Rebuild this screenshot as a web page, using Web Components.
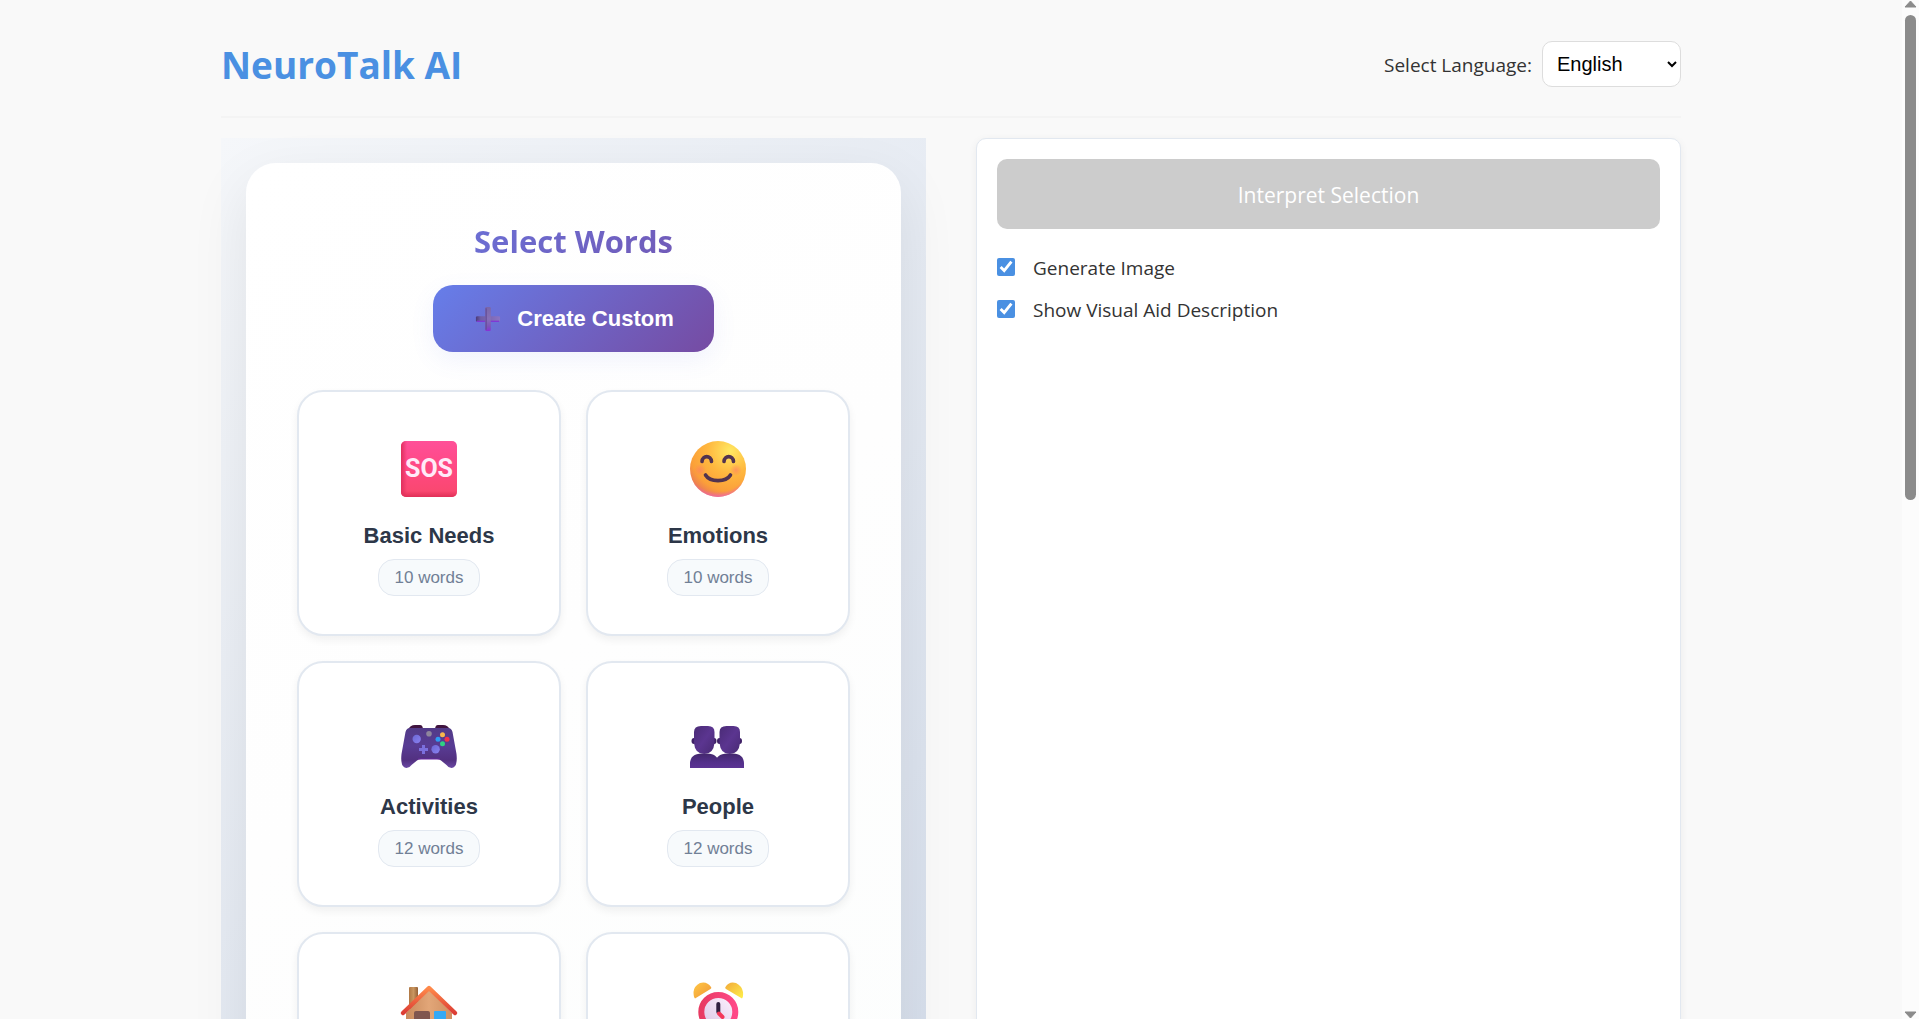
<!DOCTYPE html>
<html lang="en">
<head>
<meta charset="utf-8">
<title>NeuroTalk AI</title>
<style>
  html, body { margin: 0; height: 100%; overflow: hidden; }
  body { background: #f9f9f9; color: #333; font-family: "Segoe UI", "Open Sans", "Noto Sans", sans-serif; font-size: 19px; }
</style>
</head>
<body>
<neuro-app></neuro-app>

<script>
const define = (name, html, setup) => {
  const template = document.createElement('template');
  template.innerHTML = html;
  customElements.define(name, class extends HTMLElement {
    constructor() {
      super();
      this.attachShadow({ mode: 'open' }).append(template.content.cloneNode(true));
    }
    connectedCallback() { if (setup) setup(this, this.shadowRoot); }
  });
};

/* ---------- pictograms ---------- */
const ICONS = {
  plus: `<defs><linearGradient id="a" x1="0" y1="0" x2="0" y2="1"><stop offset="0" stop-color="#7a66a8"/><stop offset=".5" stop-color="#8670b8"/><stop offset=".8" stop-color="#7d55b8"/><stop offset="1" stop-color="#8a2fd6"/></linearGradient>
    <linearGradient id="b"><stop offset="0" stop-color="#4b3a78"/><stop offset=".2" stop-color="#6f5ea6"/><stop offset="1" stop-color="#8a74c4"/></linearGradient></defs>
    <rect x="2" y="22" width="52" height="12" rx="3" fill="url(#b)"/>
    <path d="M4 33H52" stroke="#8038d4" stroke-width="3"/>
    <rect x="22" y="2" width="12" height="52" rx="3" fill="url(#a)"/>
    <path d="M24 5V51" stroke="#66509a" stroke-width="3"/>`,
  sos: `<defs><linearGradient id="a" x1="0" y1="0" x2="0" y2="1"><stop offset="0" stop-color="#ff4f98"/><stop offset=".55" stop-color="#ff4880"/><stop offset="1" stop-color="#f8486c"/></linearGradient>
    <linearGradient id="b"><stop offset="0" stop-color="#e0305e"/><stop offset="1" stop-color="#e0305e" stop-opacity="0"/></linearGradient>
    <linearGradient id="c" x1="0" y1="1" x2="0" y2="0"><stop offset="0" stop-color="#e02f58"/><stop offset="1" stop-color="#e02f58" stop-opacity="0"/></linearGradient></defs>
    <rect width="56" height="56" rx="5" fill="url(#a)"/>
    <path d="M5 0H6V56H5A5 5 0 0 1 0 51V5A5 5 0 0 1 5 0Z" fill="url(#b)"/>
    <path d="M0 50H56V51A5 5 0 0 1 51 56H5A5 5 0 0 1 0 51Z" fill="url(#c)"/>
    <text x="28" y="36" text-anchor="middle" font-family="'Liberation Sans Narrow', 'Roboto', sans-serif" font-weight="700" font-size="25" fill="#ffeaf8">SOS</text>`,
  smile: `<defs><radialGradient id="a" cx=".72" cy=".18" r=".9"><stop offset="0" stop-color="#ffe862"/><stop offset=".45" stop-color="#ffb83f"/><stop offset=".8" stop-color="#fb9f39"/><stop offset="1" stop-color="#e8755a"/></radialGradient>
    <radialGradient id="b" cx=".5" cy=".3" r=".72"><stop offset=".84" stop-color="#f26a9e" stop-opacity="0"/><stop offset="1" stop-color="#ee64b8"/></radialGradient>
    <radialGradient id="c"><stop offset="0" stop-color="#ff7a68" stop-opacity=".6"/><stop offset="1" stop-color="#ff7a68" stop-opacity="0"/></radialGradient></defs>
    <circle cx="28" cy="28" r="28" fill="url(#a)"/><circle cx="28" cy="28" r="28" fill="url(#b)"/>
    <circle cx="10" cy="29" r="6" fill="url(#c)"/><circle cx="46" cy="29" r="6" fill="url(#c)"/>
    <path d="M12 20.500C12.500 14 21 14 21.500 20.500M34 20.500C34.500 14 43 14 43.500 20.500M15.500 34C20 41.500 36 41.500 40.500 34" fill="none" stroke="#51334f" stroke-width="3.600" stroke-linecap="round"/>`,
  gamepad: `<defs><linearGradient id="a" x1="0" y1="0" x2="0" y2="1"><stop offset="0" stop-color="#523b88"/><stop offset=".45" stop-color="#583c94"/><stop offset=".8" stop-color="#523080"/><stop offset="1" stop-color="#6b49a4"/></linearGradient>
    <linearGradient id="b" x1="0" y1="0" x2="1" y2="1"><stop offset="0" stop-color="#6b68d4"/><stop offset="1" stop-color="#8a80f0"/></linearGradient></defs>
    <path d="M7 18Q9 13 14 13H19Q22 13 22 18ZM34 18Q34 13 37 13H42Q47 13 49 18Z" fill="#40143f"/>
    <path d="M9 16H47Q50.500 16 51.500 20L55.500 42Q57 55.500 50.500 56Q47.500 56 45.500 53L40 48.500Q38.500 47 36 47H20Q17.500 47 16 48.500L10.500 53Q8.500 56 5.500 56Q-1 55.500 .5 42L4.500 20Q5.500 16 9 16Z" fill="url(#a)"/>
    <path d="M17 47H39" stroke="#6a26a2" stroke-width="1"/>
    <circle cx="15.700" cy="27" r="4.200" fill="url(#b)"/><circle cx="34.600" cy="37.200" r="4.200" fill="url(#b)"/>
    <path d="M22.500 33V42M18 37.500H27" stroke="#7b6fdd" stroke-width="3"/>
    <circle cx="28" cy="21.700" r="2.800" fill="#8e869c"/>
    <circle cx="41.500" cy="22.700" r="2.500" fill="#f8b84c"/><circle cx="37" cy="27.300" r="2.500" fill="#2e9cf4"/><circle cx="46" cy="27.300" r="2.500" fill="#f4304c"/><circle cx="41.500" cy="31.700" r="2.500" fill="#2fd383"/>`,
  people: `<defs><linearGradient id="a" x1="0" y1="0" x2="1" y2="1"><stop offset="0" stop-color="#4a2b76"/><stop offset=".5" stop-color="#5b3590"/><stop offset="1" stop-color="#492a74"/></linearGradient>
    <linearGradient id="b" x1="0" y1="0" x2="0" y2="1"><stop offset="0" stop-color="#43276c"/><stop offset=".6" stop-color="#53308a"/><stop offset="1" stop-color="#5c3494"/></linearGradient>
    <g id="p"><path d="M0 56V52Q0 41.500 12 41.500H17Q28.500 41.500 28.500 52V56Z" fill="url(#b)"/>
    <ellipse cx="4" cy="29" rx="2.500" ry="3" fill="#3f2066"/><ellipse cx="24" cy="29" rx="2.500" ry="3" fill="#3f2066"/>
    <path d="M4 20Q4 14 11 14H18Q24.500 14 24.500 20V31Q23.500 42 14.200 42Q5 42 4 31Z" fill="url(#a)"/></g></defs>
    <use href="#p"/><use href="#p" x="25.500"/>`,
  house: `<defs><linearGradient id="a"><stop offset="0" stop-color="#c98a5c"/><stop offset=".5" stop-color="#e2a678"/><stop offset="1" stop-color="#cf9062"/></linearGradient>
    <linearGradient id="b" x1="0" y1="0" x2="0" y2="1"><stop offset="0" stop-color="#ff8a4a"/><stop offset="1" stop-color="#dc3c34"/></linearGradient>
    <linearGradient id="c"><stop offset="0" stop-color="#b07845"/><stop offset=".5" stop-color="#c99660"/><stop offset="1" stop-color="#946036"/></linearGradient></defs>
    <rect x="8" y="4" width="9" height="22" rx="1" fill="url(#c)"/>
    <path d="M5 30L28 7L51 30V54H5Z" fill="url(#a)"/>
    <path d="M2 30L28 5L54 30" fill="none" stroke="url(#b)" stroke-width="4.500" stroke-linecap="round" stroke-linejoin="round"/>
    <path d="M13 54V30Q13 28 15 28H27Q29 28 29 30V54Z" fill="#80564f"/>
    <rect x="33" y="28" width="12" height="13" rx="1" fill="#35a9f5"/>`,
  clock: `<defs><linearGradient id="a" x1="0" y1="0" x2="1" y2="1"><stop offset="0" stop-color="#ffc845"/><stop offset="1" stop-color="#ef9436"/></linearGradient>
    <linearGradient id="b" x1="0" y1="0" x2="1" y2="1"><stop offset="0" stop-color="#f2a93a"/><stop offset="1" stop-color="#fff04a"/></linearGradient>
    <linearGradient id="c"><stop offset="0" stop-color="#e83a62"/><stop offset="1" stop-color="#ff4888"/></linearGradient>
    <linearGradient id="d" x1="1" y1="0" x2="0" y2="1"><stop offset="0" stop-color="#fff4ff"/><stop offset="1" stop-color="#d9c4e4"/></linearGradient></defs>
    <path d="M5 15.500Q3.500 14 3.500 9Q4 3 10 0Q17 -2 21 4Q22 5 20.500 6Z" fill="url(#a)"/>
    <path d="M52 15.500Q53.500 14 53 9Q52 3 46 0Q39 -2 35.500 4Q34.500 5 36 6Z" fill="url(#b)"/>
    <circle cx="28.300" cy="29" r="17" fill="url(#d)" stroke="url(#c)" stroke-width="6"/>
    <path d="M28.300 21V29" stroke="#30203f" stroke-width="4" stroke-linecap="round"/><path d="M29 30.500L32.500 34" stroke="#f4395a" stroke-width="4" stroke-linecap="round"/>`
};
define('picto-icon', `
<style>
  :host { display: block; width: 56px; height: 56px; }
  svg { display: block; width: 100%; height: 100%; overflow: visible; }
</style>
<svg viewBox="0 0 56 56" aria-hidden="true"></svg>`,
  (host, root) => { root.querySelector('svg').innerHTML = ICONS[host.getAttribute('name')]; });

/* ---------- header ---------- */
define('app-header', `
<style>
  :host { display: block; }
  header { display: flex; justify-content: space-between; align-items: center; height: 88px; padding-bottom: 8px; border-bottom: 2px solid #f4f4f4; }
  h1 { margin: 0; padding-top: 2px; font-size: 37px; line-height: 56px; color: #4a90e2; }
  .language { display: flex; align-items: center; gap: 10px; }
  label { padding-top: 2px; }
  select { width: 139px; height: 46px; padding: 0 10px; font: 20px "Liberation Sans", Arial, sans-serif; color: #000; background: #fff; border: 1px solid #ddd; border-radius: 10px; }
</style>
<header>
  <h1>NeuroTalk AI</h1>
  <div class="language">
    <label for="language">Select Language:</label>
    <select id="language"><option>English</option></select>
  </div>
</header>`);

/* ---------- word categories ---------- */
define('category-card', `
<style>
  :host { display: block; }
  button { display: flex; flex-direction: column; align-items: center; width: 100%; padding: 49px 16px 38px; background: #fff; border: 2px solid #e2e8f0; border-radius: 26px; box-shadow: 0 4px 8px rgba(0, 0, 0, .06); font-family: "Liberation Sans", Arial, sans-serif; cursor: pointer; }
  .name { margin: 26px 0 10px; font-size: 22px; font-weight: 700; line-height: 26px; color: #2d3748; }
  .count { box-sizing: border-box; height: 37px; padding: 0 16px; font-size: 17px; line-height: 35px; color: #718096; background: #f7fafc; border: 1px solid #e2e8f0; border-radius: 16px; }
</style>
<button type="button">
  <slot name="icon"></slot>
  <span class="name"><slot></slot></span>
  <span class="count"><slot name="count"></slot></span>
</button>`);

define('word-selector', `
<style>
  :host { display: block; padding: 25px; background: linear-gradient(135deg, #f5f7fa 0%, #c3cfe2 100%); }
  section { padding: 53px 51px 51px; min-height: 1780px; background: linear-gradient(145deg, #fff 0%, #fefefe 30%, #fafdfc 100%); border-radius: 30px; box-shadow: 0 20px 60px rgba(0, 0, 0, .08); }
  .top { display: flex; flex-direction: column; align-items: center; gap: 18px; margin-bottom: 38px; }
  h2 { margin: 0; align-self: stretch; text-align: center; font-size: 31px; line-height: 51px; color: transparent; background: linear-gradient(135deg, #667eea 0%, #764ba2 100%); background-clip: text; -webkit-background-clip: text; }
  .create { display: flex; align-items: center; justify-content: center; gap: 16px; height: 67px; padding: 0 40px 0 42px; border: 0; border-radius: 20px; background: linear-gradient(135deg, #667eea 0%, #764ba2 100%); box-shadow: 0 8px 25px rgba(102, 126, 234, .09); color: #fff; font: 700 22px "Liberation Sans", Arial, sans-serif; }
  .create picto-icon { width: 26px; height: 26px; }
  .grid { display: grid; grid-template-columns: 1fr 1fr; gap: 25px; }
</style>
<section>
  <div class="top">
    <h2>Select Words</h2>
    <button class="create" type="button"><picto-icon name="plus"></picto-icon>Create Custom</button>
  </div>
  <div class="grid">
    <category-card><picto-icon slot="icon" name="sos"></picto-icon>Basic Needs<span slot="count">10 words</span></category-card>
    <category-card><picto-icon slot="icon" name="smile"></picto-icon>Emotions<span slot="count">10 words</span></category-card>
    <category-card><picto-icon slot="icon" name="gamepad"></picto-icon>Activities<span slot="count">12 words</span></category-card>
    <category-card><picto-icon slot="icon" name="people"></picto-icon>People<span slot="count">12 words</span></category-card>
    <category-card><picto-icon slot="icon" name="house"></picto-icon></category-card>
    <category-card><picto-icon slot="icon" name="clock"></picto-icon></category-card>
  </div>
</section>`);

/* ---------- interpretation ---------- */
define('option-check', `
<style>
  :host { display: block; }
  label { display: flex; align-items: center; gap: 18px; line-height: 30px; }
  span { padding-top: 2px; }
  input { width: 18px; height: 18px; margin: 0; accent-color: #4a90e2; }
</style>
<label><input type="checkbox" checked><span><slot></slot></span></label>`);

define('interpret-panel', `
<style>
  :host { display: block; padding: 20px; background: #fff; border: 1px solid #e2e8f0; border-radius: 10px; box-shadow: 0 2px 8px rgba(0, 0, 0, .06); }
  button { display: block; width: 100%; height: 70px; margin-bottom: 22px; padding: 2px 0 0; border: 0; border-radius: 10px; background: #ccc; color: #fff; font-family: inherit; font-size: 21px; }
  .options { display: flex; flex-direction: column; gap: 10px; }
</style>
<button type="button" disabled>Interpret Selection</button>
<div class="options">
  <option-check>Generate Image</option-check>
  <option-check>Show Visual Aid Description</option-check>
</div>`);

/* ---------- scroll rail ---------- */
define('scroll-rail', `
<style>
  :host { display: flex; flex-direction: column; align-items: center; box-sizing: border-box; width: 17px; background: #fcfcfc; }
  svg { display: block; flex: none; width: 13px; height: 8px; }
  .track { flex: 1; padding: 7px 0; }
  .thumb { width: 11px; height: 49%; border-radius: 6px; background: #8b8b8b; }
</style>
<svg viewBox="0 0 13 8"><path d="M6.500 1L12 7H1Z" fill="#8b8b8b" stroke="#8b8b8b" stroke-linejoin="round"/></svg>
<div class="track"><div class="thumb"></div></div>
<svg viewBox="0 0 13 8"><path d="M6.500 7L12 1H1Z" fill="#8b8b8b" stroke="#8b8b8b" stroke-linejoin="round"/></svg>`);

define('neuro-app', `
<style>
  :host { display: flex; height: 100vh; overflow: hidden; }
  .page { flex: 1; min-width: 0; overflow: hidden; }
  .container { box-sizing: border-box; max-width: 1500px; margin: 0 auto; padding: 20px; }
  main { display: grid; grid-template-columns: 1fr 1fr; gap: 50px; margin-top: 20px; }
</style>
<div class="page">
  <div class="container">
    <app-header></app-header>
    <main>
      <word-selector></word-selector>
      <interpret-panel></interpret-panel>
    </main>
  </div>
</div>
<scroll-rail></scroll-rail>`);
</script>
</body>
</html>
